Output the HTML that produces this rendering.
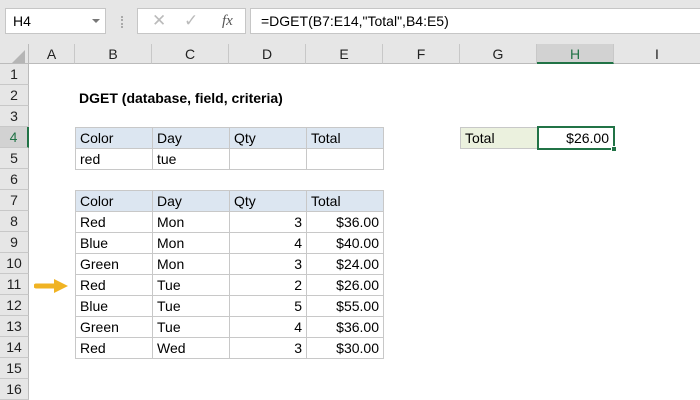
<!DOCTYPE html><html><head><style>
body{margin:0;width:700px;height:400px;overflow:hidden;background:#fff;font-family:"Liberation Sans",Calibri,sans-serif;position:relative}
.a{position:absolute;box-sizing:border-box}
.top{left:0;top:0;width:700px;height:44px;background:#e6e6e6}
.box{background:#fff;border:1px solid #c6c6c6}
.ch{top:44px;height:20px;font-size:14px;color:#222;text-align:center;line-height:20px;border-right:1px solid #c8c8c8;border-bottom:1px solid #bbb;background:#e6e6e6}
.rh{left:0;width:29px;height:21px;font-size:14px;color:#222;text-align:center;line-height:21px;background:#e6e6e6;border-bottom:1px solid #c8c8c8;border-right:1px solid #bbb}
.c{height:22px;font-size:14px;line-height:21px;padding:0 4px;border:1px solid #c8c8c8;color:#000;white-space:nowrap}
.h{background:#dce6f1}
.r{text-align:right}
</style></head><body>
<div class="a top"></div>
<div class="a box" style="left:5px;top:8px;width:101px;height:26px;font-size:14px;line-height:24px;padding-left:7px">H4</div>
<div class="a" style="left:92px;top:19px;border-left:4px solid transparent;border-right:4px solid transparent;border-top:4px solid #777"></div>
<div class="a" style="left:121px;top:16px;width:2px;height:12px;border-left:2px dotted #aaa"></div>
<div class="a box" style="left:137px;top:8px;width:109px;height:26px;font-size:17px;color:#bbb;line-height:24px"><span style="position:absolute;left:14px">✕</span><span style="position:absolute;left:46px">✓</span><span style="position:absolute;left:84px;color:#555;font-style:italic;font-family:'Liberation Serif',serif;font-size:15px">fx</span></div>
<div class="a box" style="left:250px;top:8px;width:460px;height:26px;font-size:14px;line-height:24px;padding-left:10px">=DGET(B7:E14,"Total",B4:E5)</div>
<div class="a" style="left:0;top:44px;width:29px;height:20px;background:#e6e6e6;border-right:1px solid #bbb;border-bottom:1px solid #bbb"></div>
<div class="a" style="left:12px;top:50px;border-left:13px solid transparent;border-bottom:13px solid #b5b5b5"></div>
<div class="a ch" style="left:29px;width:46px">A</div>
<div class="a ch" style="left:75px;width:77px">B</div>
<div class="a ch" style="left:152px;width:77px">C</div>
<div class="a ch" style="left:229px;width:77px">D</div>
<div class="a ch" style="left:306px;width:77px">E</div>
<div class="a ch" style="left:383px;width:77px">F</div>
<div class="a ch" style="left:460px;width:77px">G</div>
<div class="a ch" style="left:537px;width:77px;background:#d2d2d2;border-bottom:2px solid #217346;color:#217346">H</div>
<div class="a ch" style="left:614px;width:86px;border-right:none">I</div>
<div class="a rh" style="top:64px">1</div><div class="a rh" style="top:85px">2</div><div class="a rh" style="top:106px">3</div>
<div class="a rh" style="top:127px;background:#d2d2d2;border-right:2px solid #217346;color:#217346">4</div>
<div class="a rh" style="top:148px">5</div><div class="a rh" style="top:169px">6</div><div class="a rh" style="top:190px">7</div><div class="a rh" style="top:211px">8</div><div class="a rh" style="top:232px">9</div><div class="a rh" style="top:253px">10</div><div class="a rh" style="top:274px">11</div><div class="a rh" style="top:295px">12</div><div class="a rh" style="top:316px">13</div><div class="a rh" style="top:337px">14</div><div class="a rh" style="top:358px">15</div><div class="a rh" style="top:379px">16</div>
<div class="a" style="left:79px;top:88px;font-size:14px;font-weight:bold;line-height:21px">DGET (database, field, criteria)</div>

<div class="a c h" style="left:75px;top:127px;width:78px">Color</div>
<div class="a c h" style="left:152px;top:127px;width:78px">Day</div>
<div class="a c h" style="left:229px;top:127px;width:78px">Qty</div>
<div class="a c h" style="left:306px;top:127px;width:78px">Total</div>
<div class="a c" style="left:75px;top:148px;width:78px">red</div>
<div class="a c" style="left:152px;top:148px;width:78px">tue</div>
<div class="a c" style="left:229px;top:148px;width:78px"></div>
<div class="a c" style="left:306px;top:148px;width:78px"></div>

<div class="a c" style="left:460px;top:127px;width:78px;background:#ebf1de">Total</div>
<div class="a c r" style="left:537px;top:126px;width:78px;height:24px;border:2px solid #217346;line-height:20px">$26.00</div>
<div class="a" style="left:611px;top:146px;width:6px;height:6px;background:#217346;border:1px solid #fff"></div>

<div class="a c h" style="left:75px;top:190px;width:78px">Color</div><div class="a c h" style="left:152px;top:190px;width:78px">Day</div><div class="a c h" style="left:229px;top:190px;width:78px">Qty</div><div class="a c h" style="left:306px;top:190px;width:78px">Total</div>
<div class="a c" style="left:75px;top:211px;width:78px">Red</div><div class="a c" style="left:152px;top:211px;width:78px">Mon</div><div class="a c r" style="left:229px;top:211px;width:78px">3</div><div class="a c r" style="left:306px;top:211px;width:78px">$36.00</div>
<div class="a c" style="left:75px;top:232px;width:78px">Blue</div><div class="a c" style="left:152px;top:232px;width:78px">Mon</div><div class="a c r" style="left:229px;top:232px;width:78px">4</div><div class="a c r" style="left:306px;top:232px;width:78px">$40.00</div>
<div class="a c" style="left:75px;top:253px;width:78px">Green</div><div class="a c" style="left:152px;top:253px;width:78px">Mon</div><div class="a c r" style="left:229px;top:253px;width:78px">3</div><div class="a c r" style="left:306px;top:253px;width:78px">$24.00</div>
<div class="a c" style="left:75px;top:274px;width:78px">Red</div><div class="a c" style="left:152px;top:274px;width:78px">Tue</div><div class="a c r" style="left:229px;top:274px;width:78px">2</div><div class="a c r" style="left:306px;top:274px;width:78px">$26.00</div>
<div class="a c" style="left:75px;top:295px;width:78px">Blue</div><div class="a c" style="left:152px;top:295px;width:78px">Tue</div><div class="a c r" style="left:229px;top:295px;width:78px">5</div><div class="a c r" style="left:306px;top:295px;width:78px">$55.00</div>
<div class="a c" style="left:75px;top:316px;width:78px">Green</div><div class="a c" style="left:152px;top:316px;width:78px">Tue</div><div class="a c r" style="left:229px;top:316px;width:78px">4</div><div class="a c r" style="left:306px;top:316px;width:78px">$36.00</div>
<div class="a c" style="left:75px;top:337px;width:78px">Red</div><div class="a c" style="left:152px;top:337px;width:78px">Wed</div><div class="a c r" style="left:229px;top:337px;width:78px">3</div><div class="a c r" style="left:306px;top:337px;width:78px">$30.00</div>

<svg class="a" style="left:34px;top:278px" width="36" height="16"><path d="M2 8H22" stroke="#f0b323" stroke-width="5" stroke-linecap="round"/><path d="M20 1L34 8L20 15Z" fill="#f0b323"/></svg>
</body></html>
